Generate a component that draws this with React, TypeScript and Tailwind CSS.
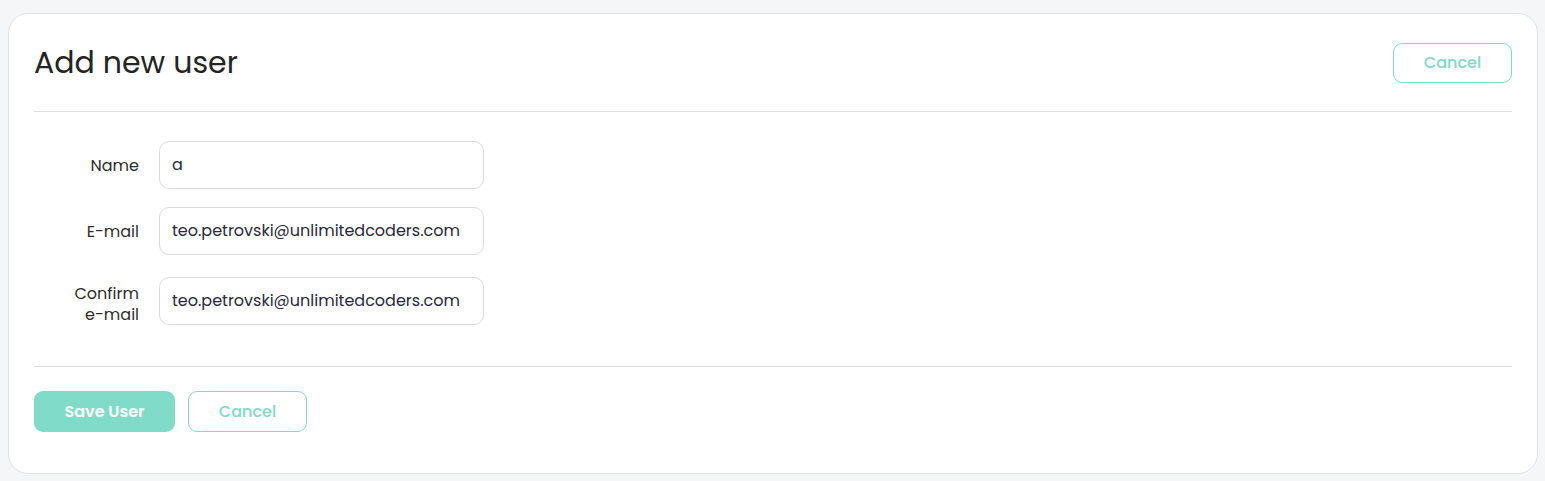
import React from "react";

export default function App() {
  const font = { fontFamily: "Poppins, Inter, 'Noto Sans', sans-serif" };
  return (
    <div className="min-h-[481px] w-full bg-[#f5f6f8] pl-2 pr-[7px] pt-[13px] pb-2" style={font}>
      <div className="rounded-[20px] border border-[#e2e2e2] bg-white pl-[25px] pr-[25px]">
        <div className="flex h-[98px] items-center justify-between border-b border-[#dedede] pt-[1px]">
          <h1 className="text-[30px] font-normal leading-none text-[#242424]">Add new user</h1>
          <button className="h-[40px] w-[119px] rounded-[9px] border border-[#80dcc8] text-[16px] font-medium text-[#7fd9c6]">
            Cancel
          </button>
        </div>
        <div className="flex flex-col border-b border-[#dedede] pt-[29px] pb-[41px]">
          <Row label={["Name"]} value="a" />
          <div className="h-[18px]" />
          <Row label={["E-mail"]} value="teo.petrovski@unlimitedcoders.com" />
          <div className="h-[22px]" />
          <Row label={["Confirm", "e-mail"]} value="teo.petrovski@unlimitedcoders.com" shift />
        </div>
        <div className="flex gap-[13px] pt-[24px] pb-[41px]">
          <button className="h-[41px] w-[141px] rounded-[9px] bg-[#80dcc8] text-[16px] font-semibold text-white">
            Save User
          </button>
          <button className="h-[41px] w-[119px] rounded-[9px] border border-[#80dcc8] text-[16px] font-medium text-[#7fd9c6]">
            Cancel
          </button>
        </div>
      </div>
    </div>
  );
}

function Row({ label, value, shift }: { label: string[]; value: string; shift?: boolean }) {
  return (
    <div className="flex items-center">
      <div
        className={
          shift
            ? "mt-[6px] w-[105px] text-right text-[16px] leading-[21px] text-[#2d2d2d]"
            : "w-[105px] text-right text-[16px] leading-[21px] text-[#2d2d2d]"
        }
      >
        {label.map((l) => (
          <div key={l}>{l}</div>
        ))}
      </div>
      <div className="ml-[20px] flex h-[48px] w-[325px] items-center rounded-[10px] border border-[#dcdcdc] px-[12px] text-[16px] text-[#2a2a3a]">
        {value}
      </div>
    </div>
  );
}
